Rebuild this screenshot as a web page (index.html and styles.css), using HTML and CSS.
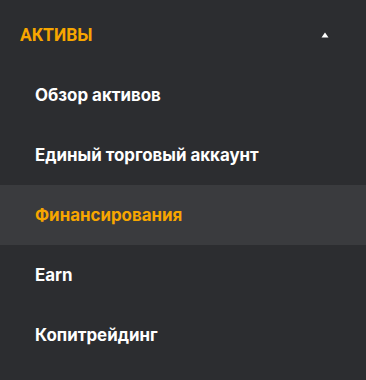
FILE: index.html
```html
<!DOCTYPE html>
<html lang="ru">
<head>
<meta charset="utf-8">
<link rel="stylesheet" href="styles.css">
</head>
<body>
<nav class="menu">
  <div class="head">
    <span class="head-title">АКТИВЫ</span>
    <svg class="caret" width="8" height="6" viewBox="0 0 8 6"><path d="M4 0.5 L7.5 5.5 L0.5 5.5 Z" fill="#ffffff"/></svg>
  </div>
  <ul class="list">
    <li class="item">Обзор активов</li>
    <li class="item">Единый торговый аккаунт</li>
    <li class="item active">Финансирования</li>
    <li class="item">Earn</li>
    <li class="item">Копитрейдинг</li>
  </ul>
</nav>
</body>
</html>
```
FILE: styles.css
```css
html, body {
  margin: 0;
  padding: 0;
  background: #2c2d30;
}
body {
  width: 366px;
  height: 380px;
  overflow: hidden;
  font-family: Inter, "Liberation Sans", sans-serif;
  font-weight: bold;
}
.menu {
  display: flex;
  flex-direction: column;
}
.head {
  height: 60px;
  padding-top: 5px;
  padding-left: 20px;
  padding-right: 37px;
  display: flex;
  align-items: center;
  justify-content: space-between;
}
.head-title {
  color: #f7a600;
  font-family: Roboto, "Liberation Sans", sans-serif;
  font-size: 17.5px;
}
.caret {
  display: block;
}
.list {
  list-style: none;
  margin: 0;
  padding: 0;
}
.item {
  height: 60px;
  display: flex;
  align-items: center;
  padding-left: 35px;
  color: #ffffff;
  font-size: 16.9px;
}
.item.active {
  background: #3a3b3e;
  color: #f7a600;
}
```
